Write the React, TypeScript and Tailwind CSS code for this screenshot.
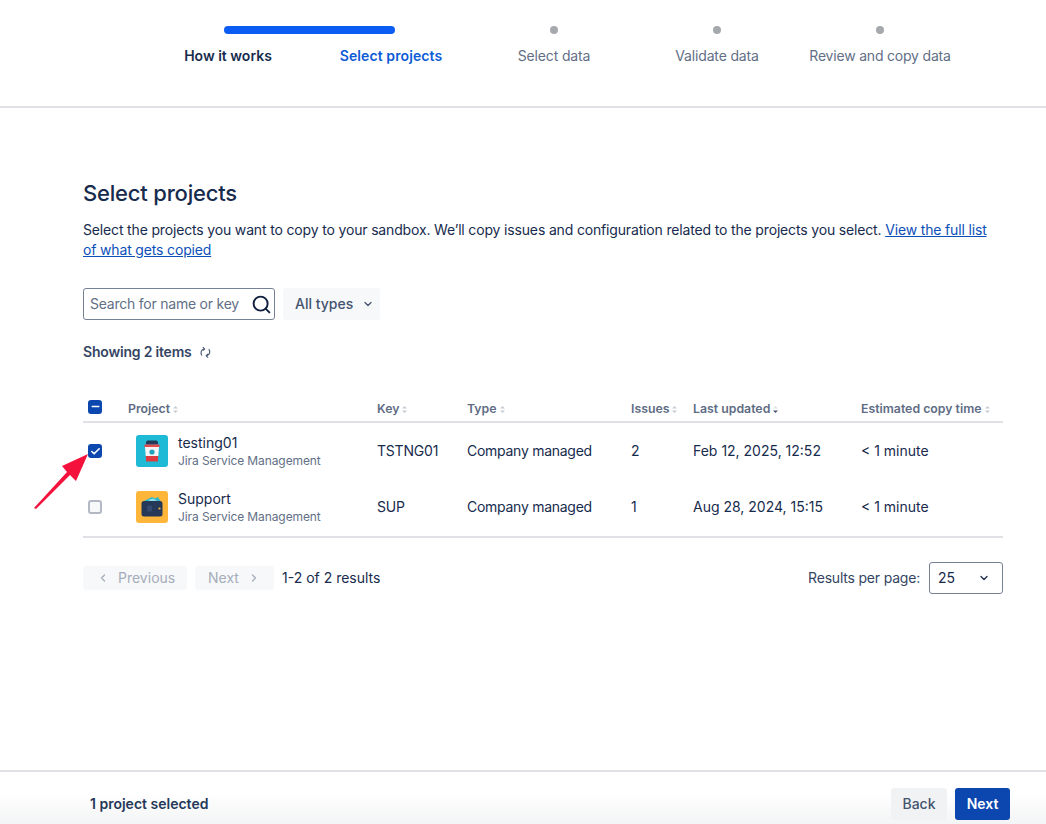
import { Check, ChevronDown, ChevronLeft, ChevronRight, Minus, Search } from "lucide-react";

const steps = ["How it works", "Select projects", "Select data", "Validate data", "Review and copy data"];
const stepColors = [
  "text-[#172b4d] font-semibold",
  "text-[#0c5cd6] font-semibold tracking-[0.1px]",
  "text-[#626f86] tracking-[-0.15px]",
  "text-[#626f86] tracking-[-0.15px]",
  "text-[#626f86] tracking-[-0.2px]",
];

const columns = [
  { label: "Project", sort: "none" },
  { label: "Key", sort: "none" },
  { label: "Type", sort: "none" },
  { label: "Issues", sort: "none" },
  { label: "Last updated", sort: "desc" },
  { label: "Estimated copy time", sort: "none" },
];

const gridCols = "grid grid-cols-[45px_249px_90px_164px_62px_168px_142px] items-center";

function SortIcon({ sort }: { sort: string }) {
  return (
    <svg width="7" height="9" viewBox="0 0 7 9" className="ml-[2px] mt-[1px] shrink-0">
      <path d="M3.5 1 L6 3.6 H1 Z" fill={sort === "desc" ? "#dfe1e6" : "#c7ccd4"} />
      <path d="M3.5 8 L6 5.4 H1 Z" fill={sort === "desc" ? "#44546f" : "#c7ccd4"} />
    </svg>
  );
}

function RefreshIcon() {
  return (
    <svg width="13" height="13" viewBox="0 0 13 13" fill="none" stroke="#44546f" strokeWidth="1.1" className="shrink-0">
      <path d="M3 9.5 C1.2 7.5 1.8 3.6 5.2 3" />
      <path d="M3.8 1.2 L5.6 3 L3.8 4.6" />
      <path d="M9.8 3.2 C11.6 5.2 11 9 7.6 9.8" />
      <path d="M9 8 L7.2 9.8 L9 11.6" />
    </svg>
  );
}

function CoffeeIcon() {
  return (
    <svg width="32" height="32" viewBox="0 0 32 32" className="shrink-0">
      <rect width="32" height="32" rx="3" fill="#1fbad6" />
      <path d="M10 7.5 Q10 5.5 12 5.5 H20 Q22 5.5 22 7.5 V9.5 H10 Z" fill="#253858" />
      <path d="M8.5 9.5 H23.5 V12 H8.5 Z" fill="#e5484d" />
      <path d="M9 12 H23 L22.3 21 H9.7 Z" fill="#f4f5f7" />
      <path d="M9.7 21 H22.3 L21.8 26.5 H10.2 Z" fill="#de3b40" />
      <circle cx="16" cy="17" r="2.6" fill="#1fa3bf" />
    </svg>
  );
}

function WalletIcon() {
  return (
    <svg width="32" height="32" viewBox="0 0 32 32" className="shrink-0">
      <rect width="32" height="32" rx="3" fill="#fdb63a" />
      <path d="M8 10 L16 6 L19 7.5 L22 6 L25 11 H8 Z" fill="#2fb5c8" />
      <path d="M12 9 L17 7.5 L21 9.5 L15 10.5 Z" fill="#8fe0e6" />
      <rect x="5.5" y="10" width="21" height="15.5" rx="2.5" fill="#253858" />
      <rect x="11" y="14.5" width="5" height="6" rx="1" fill="#344a70" />
      <circle cx="23.5" cy="17.5" r="1.1" fill="#fdb63a" />
    </svg>
  );
}

const rows = [
  { name: "testing01", icon: <CoffeeIcon />, key: "TSTNG01", type: "Company managed", issues: "2", updated: "Feb 12, 2025, 12:52", checked: true },
  { name: "Support", icon: <WalletIcon />, key: "SUP", type: "Company managed", issues: "1", updated: "Aug 28, 2024, 15:15", checked: false },
];

export default function App() {
  return (
    <div className="relative flex h-[824px] flex-col overflow-hidden bg-white font-['Inter',sans-serif] text-sm text-[#172b4d]">
      <header className="h-[108px] shrink-0 border-b-2 border-[#dfe1e6] pt-[26px]">
        <div className="ml-[146.5px] grid w-[815px] grid-cols-5">
          <div className="col-span-2 pl-[77.5px]">
            <div className="h-2 w-[171px] rounded-full bg-[#0b5cf2]" />
          </div>
          {[0, 1, 2].map((i) => (
            <div key={i} className="flex h-2 justify-center">
              <div className="size-2 rounded-full bg-[#a5a8ad]" />
            </div>
          ))}
          {steps.map((step, i) => (
            <div key={step} className={`mt-[12px] text-center leading-5 whitespace-nowrap ${stepColors[i]}`}>
              {step}
            </div>
          ))}
        </div>
      </header>

      <main className="flex-1 pl-[83px] pr-[43px] pt-[71px]">
        <h1 className="text-[22px] leading-7 font-medium tracking-[-0.2px] text-[#172b4d]">Select projects</h1>
        <p className="mt-[13px] text-sm leading-5 tracking-[-0.16px] text-[#172b4d]">
          Select the projects you want to copy to your sandbox. We’ll copy issues and configuration related to the projects you select.{" "}
          <a className="text-[#0c4fb8] underline">View the full list of what gets copied</a>
        </p>

        <div className="mt-[28px] flex gap-2">
          <div className="flex h-8 w-[192px] items-center justify-between rounded-[3px] border border-[#758195] pl-[6px] pr-[2px]">
            <span className="text-sm tracking-[-0.23px] text-[#626f86]">Search for name or key</span>
            <Search size={21} strokeWidth={2.2} className="text-[#0f1f3d]" />
          </div>
          <div className="flex h-8 w-[97px] items-center gap-[9px] rounded-[3px] bg-[#f7f8f9] pl-3 font-medium text-[#44546f]">
            All types
            <ChevronDown size={12} strokeWidth={2.5} />
          </div>
        </div>

        <div className="mt-[22px] flex h-5 items-center gap-[7px] font-semibold tracking-[-0.2px] text-[#344563]">
          Showing 2 items
          <RefreshIcon />
        </div>

        <div className={`${gridCols} mt-[32px] h-[29px] border-b-2 border-[#dfe1e6] pb-[2px]`}>
          <div className="pl-[5px]">
            <div className="flex size-[14px] items-center justify-center rounded-[3px] bg-[#0c47b0]">
              <Minus size={11} strokeWidth={3.5} className="text-white" />
            </div>
          </div>
          {columns.map((col) => (
            <div key={col.label} className="flex items-center pt-[4px] text-[12.3px] font-semibold whitespace-nowrap text-[#5e6c84]">
              {col.label}
              <SortIcon sort={col.sort} />
            </div>
          ))}
        </div>

        <div className="border-b-2 border-[#dfe1e6] pb-[1px]">
          {rows.map((row) => (
            <div key={row.name} className={`${gridCols} h-14`}>
              <div className="pl-[5px]">
                {row.checked ? (
                  <div className="flex size-[14px] items-center justify-center rounded-[3px] bg-[#0c47b0]">
                    <Check size={11} strokeWidth={3.5} className="text-white" />
                  </div>
                ) : (
                  <div className="size-[14px] rounded-[3px] border-2 border-[#b3b9c4] bg-[#f7f8f9]" />
                )}
              </div>
              <div className="flex items-center gap-[10px] pl-2">
                {row.icon}
                <div>
                  <div className="leading-[18px]">{row.name}</div>
                  <div className="mt-[1px] text-xs leading-4 tracking-[-0.1px] text-[#626f86]">Jira Service Management</div>
                </div>
              </div>
              <div className="tracking-[-0.2px]">{row.key}</div>
              <div className="tracking-[-0.27px]">{row.type}</div>
              <div>{row.issues}</div>
              <div className="whitespace-nowrap">{row.updated}</div>
              <div>&lt; 1 minute</div>
            </div>
          ))}
        </div>

        <div className="mt-[24px] flex items-center justify-between">
          <div className="flex items-center">
            <div className="flex h-6 w-[104px] items-center gap-[9px] rounded-[3px] bg-[#f7f8f9] pl-[14px] text-[#a5adba]">
              <ChevronLeft size={12} strokeWidth={2.5} />
              Previous
            </div>
            <div className="ml-2 flex h-6 w-[79px] items-center gap-[9px] rounded-[3px] bg-[#f7f8f9] pl-[13px] text-[#a5adba]">
              Next
              <ChevronRight size={12} strokeWidth={2.5} />
            </div>
            <span className="ml-2">1-2 of 2 results</span>
          </div>
          <div className="flex items-center gap-[9px]">
            <span className="tracking-[-0.2px] text-[#344563]">Results per page:</span>
            <div className="flex h-8 w-[74px] items-center justify-between rounded-[3px] border border-[#758195] pl-2 pr-[12px]">
              25
              <ChevronDown size={12} strokeWidth={2.5} />
            </div>
          </div>
        </div>
      </main>

      <footer className="flex h-[54px] shrink-0 items-start justify-between border-t-2 border-[#dfe1e6] bg-gradient-to-b from-white from-40% to-[#f3f4f5] pl-[90px] pr-[36px] pt-[16px]">
        <span className="flex h-8 items-center font-semibold text-[#253858]">1 project selected</span>
        <div className="flex gap-2">
          <div className="flex h-8 w-[56px] items-center justify-center rounded-[3px] bg-[#f1f2f4] font-medium text-[#44546f]">Back</div>
          <div className="flex h-8 w-[55px] items-center justify-center rounded-[3px] bg-[#0c47b0] font-semibold text-white">Next</div>
        </div>
      </footer>

      <svg width="60" height="60" viewBox="0 0 60 60" className="absolute left-[32px] top-[452px]">
        <path d="M2 56 L35 20 L30 14 L56 2 L44 29 L38 23 L4 57 Z" fill="#f4123c" />
      </svg>
    </div>
  );
}
